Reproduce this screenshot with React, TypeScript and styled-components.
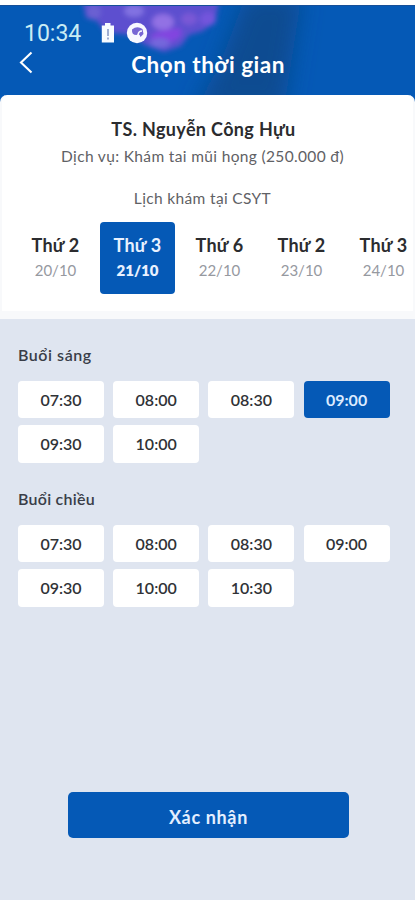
import React from "react";
import styled, { createGlobalStyle, css } from "styled-components";

const BLUE = "#0559b6";

const GlobalStyle = createGlobalStyle`
  * { box-sizing: border-box; }
  html, body { margin: 0; background: #dfe5f0; }
  body { font-family: Lato, "Noto Sans", sans-serif; }
  button { font: inherit; border: 0; padding: 0; cursor: pointer; }
`;

const Screen = styled.main`
  width: 415px;
  height: 900px;
  overflow: hidden;
  display: flex;
  flex-direction: column;
  background: #dfe5f0;
  border-top: 5px solid #fff;
`;

const Header = styled.header`
  position: relative;
  flex: none;
  height: 97px;
  margin-bottom: -7.5px;
  background: ${BLUE};
  color: #fff;
  overflow: hidden;
`;

const Backdrop = styled.svg`
  position: absolute;
  inset: 0;
`;

const StatusBar = styled.div`
  position: relative;
  display: flex;
  align-items: center;
  height: 43px;
  padding: 13px 0 0 24px;
`;

const Clock = styled.span`
  width: 77px;
  padding-top: 2px;
  font: 400 23px/28px Roboto, sans-serif;
  color: #c9ecf4;
`;

const TitleBar = styled.div`
  position: relative;
  display: grid;
  grid-template-columns: 60px 1fr 60px;
  align-items: center;
  height: 34px;
`;

const BackButton = styled.button`
  display: flex;
  height: 34px;
  padding-left: 19px;
  background: none;
  color: #fff;
`;

const Title = styled.h1`
  margin: 0;
  padding: 0 0 0 1px;
  text-align: center;
  font-size: 22.5px;
  line-height: 34px;
  font-weight: 700;
  white-space: nowrap;
  letter-spacing: 0.5px;
`;

const Card = styled.section`
  position: relative;
  flex: none;
  height: 224.5px;
  border-radius: 7px 7px 0 0;
  background: #fff;
  border: solid #f8f9fb;
  border-width: 0 2px 8px 2px;
  overflow: hidden;
  text-align: center;
`;

const Doctor = styled.h2`
  margin: 21px 0 0;
  padding-right: 8px;
  font-size: 18px;
  line-height: 26px;
  font-weight: 700;
  color: #2b2c2f;
  letter-spacing: 0.35px;
`;

const Detail = styled.p<{ $gap: number }>`
  margin: ${(p) => p.$gap}px 0 0;
  padding-right: 10px;
  font-size: 15.5px;
  line-height: 24px;
  color: #5f6165;
  letter-spacing: 0.35px;
  white-space: nowrap;
`;

const Days = styled.div`
  display: flex;
  gap: 7px;
  margin: 12px 0 0 16px;
`;

const Day = styled.button<{ $active: boolean }>`
  flex: none;
  width: 75px;
  height: 72.5px;
  padding-bottom: 1px;
  border-radius: 4px;
  background: ${(p) => (p.$active ? BLUE : "transparent")};
  color: ${(p) => (p.$active ? "#e8f1ff" : "#2b2c2f")};
`;

const DayName = styled.div`
  font-size: 18px;
  line-height: 26px;
  font-weight: 700;
  letter-spacing: 0.2px;
`;

const DayDate = styled.div<{ $active: boolean }>`
  font-size: 15px;
  line-height: 24px;
  ${(p) =>
    p.$active
      ? css`font-weight: 800; color: #e8f1ff;`
      : css`color: #96999f;`}
`;

const Session = styled.section<{ $top: number }>`
  flex: none;
  margin: ${(p) => p.$top}px 0 0 18px;
`;

const SessionTitle = styled.h3<{ $track: number }>`
  margin: 0 0 14px;
  font-size: 16px;
  line-height: 24px;
  font-weight: 600;
  color: #393d48;
  letter-spacing: ${(p) => p.$track}px;
`;

const Slots = styled.div`
  display: grid;
  grid-template-columns: repeat(4, 86px);
  gap: 7px 9.2px;
`;

const Slot = styled.button<{ $active: boolean }>`
  height: 37.5px;
  border-radius: 4px;
  font-size: 16px;
  font-weight: ${(p) => (p.$active ? 700 : 600)};
  background: ${(p) => (p.$active ? BLUE : "#fff")};
  color: ${(p) => (p.$active ? "#dcebff" : "#303236")};
`;

const Confirm = styled.button`
  flex: none;
  width: 281px;
  height: 46px;
  margin: auto 0 62px 68px;
  padding-top: 3px;
  border-radius: 5px;
  background: ${BLUE};
  color: #e4efff;
  font-size: 18px;
  font-weight: 700;
  letter-spacing: 0.65px;
`;

const days = [
  ["Thứ 2", "20/10"],
  ["Thứ 3", "21/10"],
  ["Thứ 6", "22/10"],
  ["Thứ 2", "23/10"],
  ["Thứ 3", "24/10"],
];

const morning = ["07:30", "08:00", "08:30", "09:00", "09:30", "10:00"];
const afternoon = ["07:30", "08:00", "08:30", "09:00", "09:30", "10:00", "10:30"];

function Flowers() {
  return (
    <Backdrop width="415" height="97" viewBox="0 0 415 97" aria-hidden="true">
      <defs>
        <filter id="soft" x="-30%" y="-30%" width="160%" height="160%">
          <feGaussianBlur stdDeviation="2.6" />
        </filter>
        <filter id="shade" x="-50%" y="-50%" width="200%" height="200%">
          <feGaussianBlur stdDeviation="11" />
        </filter>
      </defs>
      <path d="M246-10h56L284 105h-90l24-42Z" fill="#094b91" filter="url(#shade)" />
      <g filter="url(#soft)">
        <path d="M82-6H220l-5 22-12 10-14 4-8 11-17 6-19-7-14-10-26-3-8-11-11-3Z" fill="#5d50cf" />
        <path d="M151 30q12-6 30-7v8q-11 9-26 8Z" fill="#8244e0" />
        <circle cx="94" cy="7" r="7" fill="#6a60d2" />
        <ellipse cx="134" cy="6" rx="10" ry="6" fill="#8272e2" />
        <ellipse cx="163" cy="17" rx="11" ry="8" fill="#9271e4" />
        <ellipse cx="189" cy="14" rx="8" ry="6" fill="#7a59d6" />
        <ellipse cx="160" cy="38" rx="10" ry="5" fill="#7467dc" />
        <ellipse cx="208" cy="14" rx="8" ry="7" fill="#7355dc" />
      </g>
      <path d="M0 .5h415" stroke="#164f98" />
    </Backdrop>
  );
}

function StatusIcons() {
  return (
    <svg width="50" height="24" viewBox="0 0 50 24" aria-hidden="true">
      <path d="M.8 4.500H4V2h5.500v2.500H13v17H.8Z" fill="#f7fbff" />
      <path d="M7 8v7M7 16.500v2" stroke="#8295c4" strokeWidth="1.5" />
      <circle cx="36" cy="12" r="10.200" fill="#f8f8ff" />
      <path d="M31 8.500q5-4 10.500-.5l1 5-3 3q-1-4-4-2-5 0-4.500-5.500Z" fill="#7867d4" />
      <path d="M37 14q.5-4 4-4" fill="none" stroke="#f8f8ff" strokeWidth="1.5" />
    </svg>
  );
}

interface SlotGroupProps {
  title: string;
  times: string[];
  selected?: string;
  top: number;
  track: number;
}

function SlotGroup({ title, times, selected, top, track }: SlotGroupProps) {
  return (
    <Session $top={top}>
      <SessionTitle $track={track}>{title}</SessionTitle>
      <Slots>
        {times.map((time) => (
          <Slot key={time} $active={time === selected}>{time}</Slot>
        ))}
      </Slots>
    </Session>
  );
}

export default function App() {
  return (
    <>
      <GlobalStyle />
      <Screen>
        <Header>
          <Flowers />
          <StatusBar>
            <Clock>10:34</Clock>
            <StatusIcons />
          </StatusBar>
          <TitleBar>
            <BackButton aria-label="Quay lại">
              <svg width="16" height="32" viewBox="0 0 16 32" fill="none" stroke="currentColor" strokeWidth="2.1">
                <path d="M12.500 4.500 2 14.500l10.500 10" />
              </svg>
            </BackButton>
            <Title>Chọn thời gian</Title>
          </TitleBar>
        </Header>
        <Card>
          <Doctor>TS. Nguyễn Công Hựu</Doctor>
          <Detail $gap={2}>Dịch vụ: Khám tai mũi họng (250.000 đ)</Detail>
          <Detail $gap={18}>Lịch khám tại CSYT</Detail>
          <Days>
            {days.map(([name, date], i) => (
              <Day key={date} $active={i === 1}>
                <DayName>{name}</DayName>
                <DayDate $active={i === 1}>{date}</DayDate>
              </Day>
            ))}
          </Days>
        </Card>
        <SlotGroup title="Buổi sáng" times={morning} selected="09:00" top={23.5} track={0.55} />
        <SlotGroup title="Buổi chiều" times={afternoon} top={24} track={0.25} />
        <Confirm>Xác nhận</Confirm>
      </Screen>
    </>
  );
}
